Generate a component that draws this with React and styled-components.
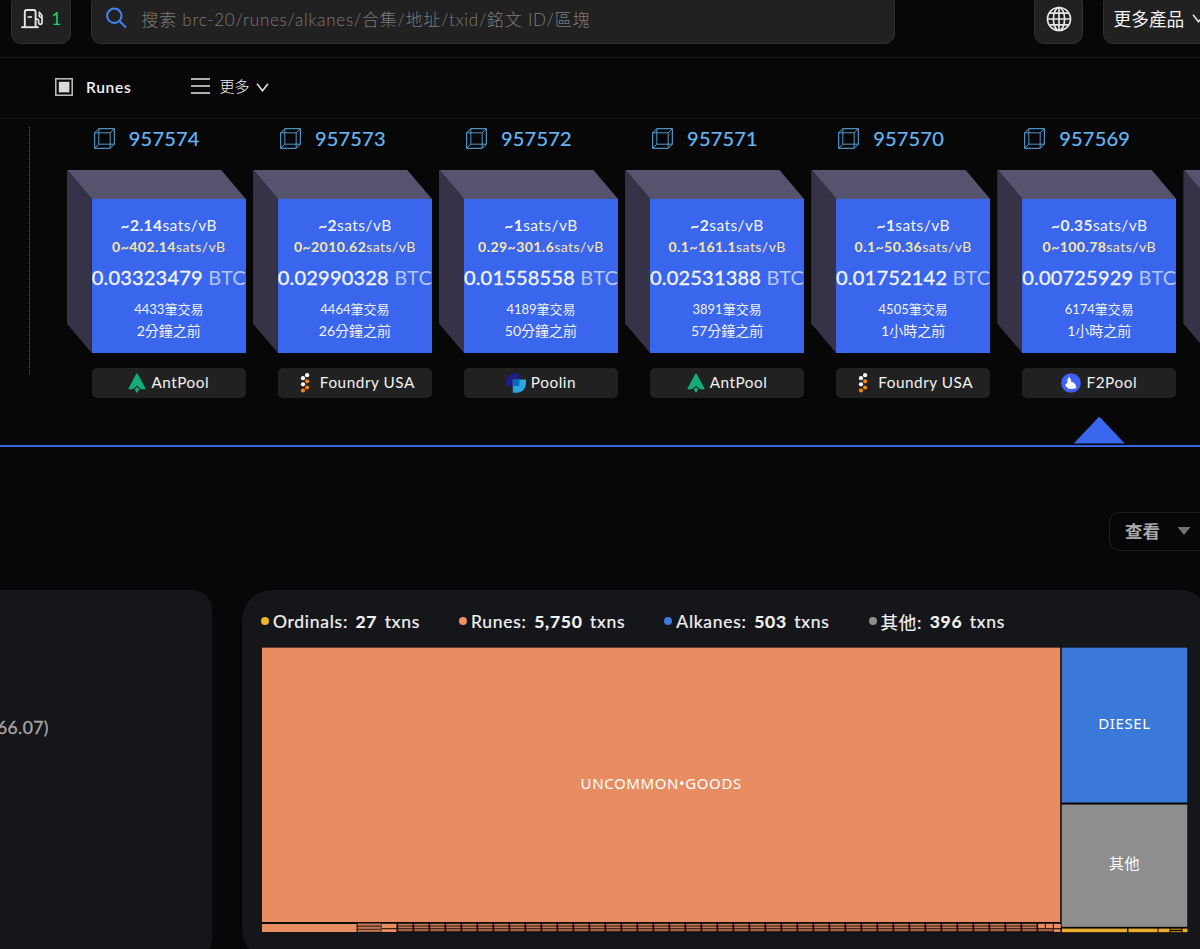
import React from "react";
import styled, { createGlobalStyle } from "styled-components";

const blocks = [
  { height: 957574, fee: "2.14", range: "0~402.14", total: "0.03323479", txs: 4433, time: "2分鐘之前", pool: "AntPool" },
  { height: 957573, fee: "2", range: "0~2010.62", total: "0.02990328", txs: 4464, time: "26分鐘之前", pool: "Foundry USA" },
  { height: 957572, fee: "1", range: "0.29~301.6", total: "0.01558558", txs: 4189, time: "50分鐘之前", pool: "Poolin" },
  { height: 957571, fee: "2", range: "0.1~161.1", total: "0.02531388", txs: 3891, time: "57分鐘之前", pool: "AntPool" },
  { height: 957570, fee: "1", range: "0.1~50.36", total: "0.01752142", txs: 4505, time: "1小時之前", pool: "Foundry USA" },
  { height: 957569, fee: "0.35", range: "0~100.78", total: "0.00725929", txs: 6174, time: "1小時之前", pool: "F2Pool", active: true },
];

const legend = [
  { name: "Ordinals", count: "27", color: "#f0b429" },
  { name: "Runes", count: "5,750", color: "#f08d62" },
  { name: "Alkanes", count: "503", color: "#3b7bdc" },
  { name: "其他", count: "396", color: "#8e8e8e" },
];

const FuelIcon = () => (
  <svg width="24" height="22" viewBox="0 0 24 22" fill="none" stroke="#e6e6e6" strokeWidth="1.9">
    <path d="M3.8 19.2V4a2 2 0 0 1 2-2h6.8a2 2 0 0 1 2 2v15.2" />
    <path d="M.2 19.2h17.4" />
    <path d="M6.6 9h4.4" strokeWidth="1.6" />
    <path d="M14.6 11h1c1.4 0 2 .8 2 1.8v2c0 1 .6 1.6 1.6 1.6s1.8-.6 1.8-1.8V7.6L17.8 3.8" strokeWidth="1.7" />
    <path d="M18.2 5.4v2.4c0 1 .8 1.6 2.6 1.6" strokeWidth="1.5" />
  </svg>
);

const SearchIcon = () => (
  <svg width="22" height="22" viewBox="0 0 22 22" fill="none" stroke="#4285f4" strokeWidth="2">
    <circle cx="8.3" cy="8.8" r="7.2" />
    <path d="M13.5 14l6.6 6.6" />
  </svg>
);

const GlobeIcon = () => (
  <svg width="26" height="26" viewBox="0 0 26 26" fill="none" stroke="#e6e6e6" strokeWidth="1.7">
    <circle cx="13" cy="13" r="11.5" />
    <ellipse cx="13" cy="13" rx="5.6" ry="11.5" />
    <path d="M13 1.5v23M1.5 13h23M3.4 7.2h19.2M3.4 18.8h19.2" />
  </svg>
);

const RunesIcon = () => (
  <svg width="18" height="18" viewBox="0 0 18 18">
    <rect x=".8" y=".8" width="16.4" height="16.4" fill="none" stroke="#c4c4c4" strokeWidth="1.5" />
    <rect x="3.8" y="3.8" width="10.6" height="10.6" fill="#dadada" />
  </svg>
);

const MenuIcon = () => (
  <svg width="19" height="18" viewBox="0 0 19 18" stroke="#e6e6e6" strokeWidth="1.7">
    <path d="M0 1h19M0 8h19M0 15h19" />
  </svg>
);

const Chevron = () => (
  <svg width="13" height="9" viewBox="0 0 13 9" fill="none" stroke="#e6e6e6" strokeWidth="1.5">
    <path d="M1 .8l5.5 7L12 .8" />
  </svg>
);

const CubeIcon = () => (
  <svg width="21" height="21" viewBox="0 0 21 21" fill="none" stroke="#5fb0ea" strokeWidth="1">
    <path d="M.7 4.8L4.8.7h15.5v15.5l-4.1 4.1H.7z" />
    <path d="M.7 4.8h15.5v15.5M16.2 4.8L20.3.7M4.8.7v15.5h15.5M4.8 16.2L.7 20.3" opacity=".85" />
  </svg>
);

const PoolIcon = ({ pool }) => {
  if (pool === "AntPool") {
    return (
      <svg width="18" height="20" viewBox="0 0 18 20" fill="#13ad78">
        <path d="M9 .4c.5 0 .8.5 1.1 1.1L17.4 15.2c.3.7-.2 1.3-1 1.2l-3.8-.3L9 12.4l-3.600 3.700-3.800.3c-.8.100-1.300-.5-1-1.200L7.900 1.500C8.200.9 8.500.4 9 .4z" />
        <path d="M9 13.800l2.400 2.700L9 19.900l-2.400-3.400z" />
      </svg>
    );
  }
  if (pool === "Foundry USA") {
    return (
      <svg width="20" height="20" viewBox="0 0 20 20">
        <g fill="#fff">
          <circle cx="12.1" cy="2.2" r="2.1" />
          <circle cx="8" cy="5.2" r="2.1" />
          <circle cx="8" cy="11.3" r="2.1" />
        </g>
        <g fill="#f7860f">
          <circle cx="12.1" cy="8.3" r="2.1" />
          <circle cx="12.1" cy="14.5" r="2.1" />
          <circle cx="8" cy="17.5" r="2.1" />
        </g>
      </svg>
    );
  }
  if (pool === "Poolin") {
    return (
      <svg width="20" height="20" viewBox="0 0 20 20">
        <path d="M13.3.2v12.7H0V9.5C0 4 4 .2 9.2.2z" fill="#1d1f86" />
        <path d="M6.8 6.5H20v3.6c0 5.6-4 9.7-9.2 9.7h-4z" fill="#2ba5e2" />
        <path d="M6.8 6.5h6.5v6.4H6.8z" fill="#0568b4" />
      </svg>
    );
  }
  return (
    <svg width="20" height="20" viewBox="0 0 20 20">
      <circle cx="10" cy="10" r="9.8" fill="#4160f5" />
      <path d="M7 5.2l1.4-1.5.8 2 .8.6-.2 2.2c2.6.2 4.6 2 5.2 4.6l.4 1.3-1.6 1.4H7.2l-.6-1.2C5 14 4.2 12.8 4.4 11.4L6.6 9.8 6.4 7z" fill="#fff" />
    </svg>
  );
};

// Small cells along the bottom of the runes area: [x, y, width, height]
const runeCells = [[119.6, 277, 15, 4], [119.6, 282.2, 15, 2.8]];
[276.6, 279.8, 282.8].forEach((y) => runeCells.push([95.8, y, 23, 2]));
for (let i = 0; i < 40; i++) {
  [277, 279.6, 282.3].forEach((y) => runeCells.push([136 + i * 16, y, 14.7, 1.5]));
}
[776, 784, 792].forEach((x) => runeCells.push([x, 277, 6.8, 4]));
runeCells.push([776, 282.3, 14.8, 1.5], [792, 282.3, 6.5, 2.7]);

const ordinalCells = [[800, 65], [866.5, 29], [896.5, 11], [920.5, 5]];

const Treemap = () => (
  <Chart width="927" height="286" viewBox="0 0 927 286">
    <rect width="926" height="285.5" fill="#0b0a0a" />
    <rect y=".6" width="798.2" height="274.4" fill="#e88c62" />
    <rect x="799.7" y=".6" width="125.6" height="154.9" fill="#3b79d8" />
    <rect x="799.7" y="157.6" width="125.6" height="122.2" fill="#8e8e8e" />
    <rect x="95" y="276" width="703" height="9" fill="#3a241b" />
    <rect y="277" width="94.6" height="8" fill="#e88c62" />
    {runeCells.map(([x, y, w, h]) => (
      <rect key={`${x}-${y}`} x={x} y={y} width={w} height={h} fill={h > 2 ? "#e88c62" : "#c47553"} />
    ))}
    {Array.from({ length: 41 }, (_, i) => (
      <rect key={i} x={134.6 + i * 16} y="276" width="1.6" height="9" fill="#1a1110" />
    ))}
    {ordinalCells.map(([x, w]) => (
      <rect key={x} x={x} y="281.6" width={w} height="3.6" fill="#e9ac2c" />
    ))}
    <rect x="908.5" y="281.6" width="11" height="1.4" fill="#a87c22" />
    <rect x="908.5" y="284" width="11" height="1.2" fill="#a87c22" />
    <ChartLabel x="399.2" y="142">UNCOMMON•GOODS</ChartLabel>
    <ChartLabel x="862.5" y="82">DIESEL</ChartLabel>
    <ChartLabel x="862.5" y="222">其他</ChartLabel>
  </Chart>
);

const App = () => {
  return (
    <>
      <GlobalStyle />
      <Page>
        <Header>
          <HeaderBox $width={60}>
            <FuelIcon />
            <GasPrice>1</GasPrice>
          </HeaderBox>
          <SearchBox>
            <SearchIcon />
            <Placeholder>搜索 brc-20/runes/alkanes/合集/地址/txid/銘文 ID/區塊</Placeholder>
          </SearchBox>
          <HeaderBox $width={49}>
            <GlobeIcon />
          </HeaderBox>
          <ProductBox>
            更多產品
            <Chevron />
          </ProductBox>
        </Header>

        <Nav>
          <NavItem>
            <RunesIcon />
            <RunesLabel>Runes</RunesLabel>
          </NavItem>
          <NavItem>
            <MenuIcon />
            <MoreLabel>更多</MoreLabel>
            <Chevron />
          </NavItem>
        </Nav>

        <Strip>
          <Divider />
          {blocks.map((b) => (
            <Block key={b.height}>
              <BlockTitle>
                <CubeIcon />
                <span>{b.height}</span>
              </BlockTitle>
              <Cube>
                <Face>
                  <Fee><b>~{b.fee}</b>sats/vB</Fee>
                  <Range><b>{b.range}</b>sats/vB</Range>
                  <Total>{b.total} <span>BTC</span></Total>
                  <TxCount>{b.txs}筆交易</TxCount>
                  <Time>{b.time}</Time>
                </Face>
              </Cube>
              <Pool>
                <PoolIcon pool={b.pool} />
                <span>{b.pool}</span>
              </Pool>
              {b.active && <Pointer />}
            </Block>
          ))}
          <Block>
            <BlockTitle />
            <Cube />
          </Block>
        </Strip>

        <Actions>
          <ViewButton>
            <span>查看</span>
            <Caret />
          </ViewButton>
        </Actions>

        <Panels>
          <SidePanel>66.07)</SidePanel>
          <MainPanel>
            <Legend>
              {legend.map((item) => (
                <LegendItem key={item.name}>
                  <Dot $color={item.color} />
                  {item.name}: <b>{item.count}</b> txns
                </LegendItem>
              ))}
            </Legend>
            <Treemap />
          </MainPanel>
        </Panels>
      </Page>
    </>
  );
};

const GlobalStyle = createGlobalStyle`
  * {
    box-sizing: border-box;
  }

  body {
    margin: 0;
    background: #070707;
    overflow: hidden;
  }

  svg {
    flex-shrink: 0;
    display: block;
  }
`;

const Page = styled.div`
  width: 1200px;
  height: 949px;
  overflow: hidden;
  color: #f2f2f2;
  background: #070707;
  font-family: Lato, "Noto Sans CJK TC", sans-serif;
  white-space: nowrap;
`;

const Header = styled.header`
  display: flex;
  align-items: flex-end;
  height: 58px;
  padding: 0 0 13px 11px;
  border-bottom: 1px solid #1b1b1b;
`;

const HeaderBox = styled.div`
  display: flex;
  flex-shrink: 0;
  align-items: center;
  justify-content: center;
  width: ${({ $width }) => $width}px;
  height: 51px;
  background: #212121;
  border: 1px solid #2f2f2f;
  border-radius: 10px;
`;

const GasPrice = styled.span`
  margin-left: 7px;
  color: #12d66b;
  font-size: 17px;
`;

const SearchBox = styled(HeaderBox)`
  width: 804px;
  margin: 0 139px 0 20px;
  padding: 0 0 1px 14px;
  justify-content: flex-start;
`;

const Placeholder = styled.span`
  margin-left: 13.5px;
  color: #7c7c7c;
  font-size: 17px;
  font-weight: 300;
  letter-spacing: 0.73px;
`;

const ProductBox = styled(HeaderBox)`
  width: 130px;
  margin-left: 20px;
  padding: 0 0 1px 9.5px;
  justify-content: flex-start;
  font-size: 17.7px;
  gap: 8px;
`;

const Nav = styled.nav`
  display: flex;
  align-items: center;
  gap: 60px;
  height: 61px;
  padding: 0 0 2px 55px;
  border-bottom: 1px solid #161616;
`;

const NavItem = styled.div`
  display: flex;
  align-items: center;
`;

const RunesLabel = styled.span`
  margin: -1px 0 0 13px;
  font-size: 15.5px;
  font-weight: 600;
  letter-spacing: 0.7px;
`;

const MoreLabel = styled.span`
  margin: -4px 7px 0 9px;
  font-size: 15px;
  font-weight: 300;
`;

const Strip = styled.section`
  display: flex;
  height: 327.5px;
  border-bottom: 2px solid #3a67ea;
`;

const Divider = styled.div`
  flex-shrink: 0;
  width: 1px;
  height: 247px;
  margin: 8px 36.8px 0 29px;
  border-left: 1px dotted #4658b4;
`;

const Block = styled.div`
  display: flex;
  flex-direction: column;
  flex-shrink: 0;
  width: 179px;
  margin-right: 7.1px;
`;

const BlockTitle = styled.div`
  display: flex;
  align-items: center;
  gap: 14px;
  height: 50.5px;
  padding: 0 0 11px 27px;
  color: #67b7f5;
  font-size: 20px;
  letter-spacing: 0.2px;
  -webkit-text-stroke: 0.2px currentColor;

  span {
    margin-top: -2px;
  }
`;

const Cube = styled.div`
  position: relative;
  flex-shrink: 0;
  height: 183.5px;
  padding: 29px 0 0 25px;

  &::before,
  &::after {
    content: "";
    position: absolute;
    top: 0;
    left: 0;
  }

  &::before {
    width: 179px;
    height: 29.5px;
    background: #55536d;
    clip-path: polygon(0 0, 154px 0, 100% 100%, 25px 100%);
  }

  &::after {
    width: 25px;
    height: 100%;
    background: #363349;
    clip-path: polygon(0 0, 100% 29px, 100% 100%, 0 154px);
  }
`;

const Face = styled.div`
  display: flex;
  flex-direction: column;
  align-items: center;
  width: 154px;
  height: 154px;
  padding-top: 15.5px;
  background: #3966ec;
`;

const Fee = styled.div`
  height: 22px;
  font-size: 15.5px;
  line-height: 22px;
  letter-spacing: 0.45px;
`;

const Range = styled.div`
  height: 22px;
  color: #f8e6a0;
  font-size: 14px;
  line-height: 22px;
  letter-spacing: 0.45px;
`;

const Total = styled.div`
  height: 39.5px;
  font-size: 20px;
  line-height: 39px;
  letter-spacing: 0.2px;
  -webkit-text-stroke: 0.35px currentColor;

  span {
    color: #b5c6f8;
    -webkit-text-stroke: 0;
  }
`;

const TxCount = styled.div`
  height: 22.5px;
  font-size: 13px;
  line-height: 22px;
`;

const Time = styled.div`
  font-size: 14px;
  line-height: 22px;
`;

const Pool = styled.div`
  display: flex;
  align-items: center;
  justify-content: center;
  flex-shrink: 0;
  gap: 5px;
  width: 154px;
  height: 30px;
  margin: 14.6px 0 0 25px;
  background: #212121;
  border-radius: 5px;
  font-size: 15.3px;
  letter-spacing: 0.55px;

  span {
    margin-top: -1px;
  }
`;

const Pointer = styled.div`
  width: 51px;
  height: 27px;
  margin: 19px 0 0 76.5px;
  background: #3966ec;
  clip-path: polygon(50% 0, 100% 100%, 0 100%);
`;

const Actions = styled.div`
  display: flex;
  justify-content: flex-end;
  height: 143px;
  padding-top: 65px;
`;

const ViewButton = styled.div`
  display: flex;
  align-items: center;
  justify-content: space-between;
  width: 111px;
  height: 39px;
  margin-right: -20px;
  padding: 0 28.5px 0 15px;
  border: 1px solid #1e1e1e;
  border-radius: 10px;
  color: #a9a9a9;
  font-size: 17.5px;
  font-weight: 700;

  span {
    padding-bottom: 2px;
  }
`;

const Caret = styled.i`
  width: 13px;
  height: 8px;
  background: #737373;
  clip-path: polygon(0 0, 100% 0, 50% 100%);
`;

const Panels = styled.div`
  display: flex;
  gap: 30px;
`;

const SidePanel = styled.div`
  flex-shrink: 0;
  width: 212px;
  height: 369px;
  padding-top: 127px;
  background: #15161a;
  border-radius: 0 20px 20px 0;
  color: #a8a8a8;
  font-size: 17.5px;
  letter-spacing: 0.4px;
  text-indent: -3px;
  -webkit-text-stroke: 0.3px currentColor;
`;

const MainPanel = styled.div`
  flex-shrink: 0;
  width: 968px;
  height: 369px;
  padding: 0 20px;
  background: #15161a;
  border-radius: 30px;
`;

const Legend = styled.div`
  display: flex;
  gap: 39px;
  height: 57px;
  padding-top: 6px;
  margin-left: -1px;
`;

const LegendItem = styled.div`
  display: flex;
  align-items: center;
  gap: 7.5px;
  font-size: 17.5px;
  letter-spacing: 0.73px;
  -webkit-text-stroke: 0.2px currentColor;
`;

const Dot = styled.i`
  width: 8px;
  height: 8px;
  margin-right: -3.5px;
  border-radius: 50%;
  background: ${({ $color }) => $color};
`;

const Chart = styled.svg`
  display: block;
`;

const ChartLabel = styled.text`
  fill: #fff;
  font-family: "Noto Sans", "Noto Sans CJK TC", sans-serif;
  font-size: 15px;
  letter-spacing: 0.6px;
  text-anchor: middle;
`;

export default App;
